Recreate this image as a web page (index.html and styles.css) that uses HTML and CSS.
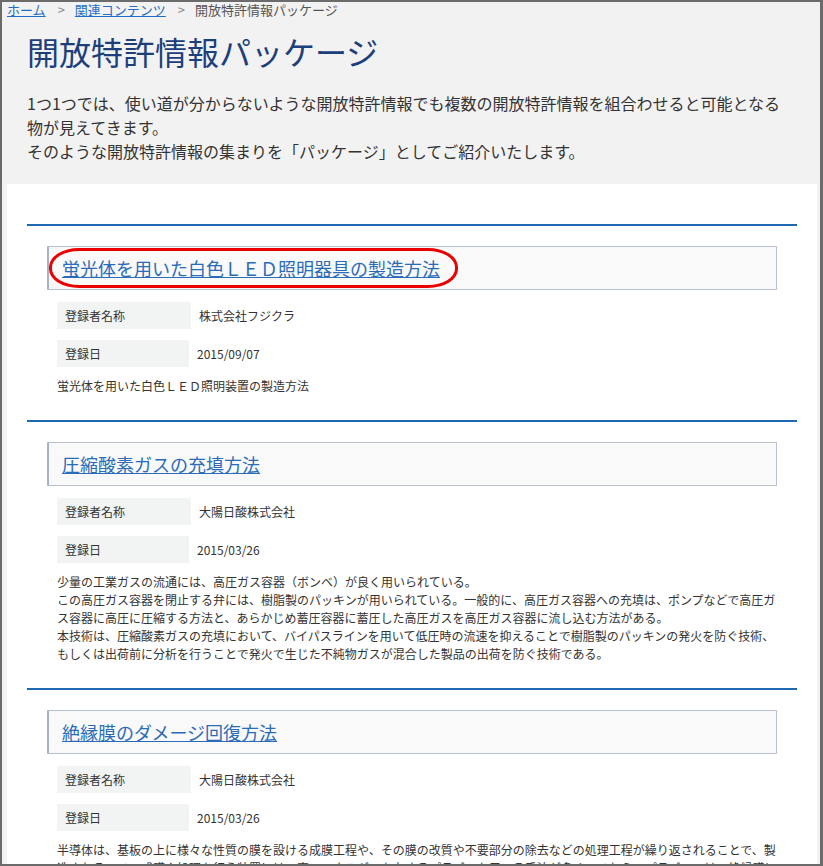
FILE: index.html
```html
<!DOCTYPE html>
<html lang="ja">
<head>
<meta charset="utf-8">
<title>開放特許情報パッケージ</title>
<link rel="stylesheet" href="styles.css">
</head>
<body>
<div class="frame">
  <nav class="breadcrumb">
    <a href="#">ホーム</a><span class="sep">&gt;</span><a href="#">関連コンテンツ</a><span class="sep">&gt;</span><span class="current">開放特許情報パッケージ</span>
  </nav>
  <header class="page-head">
    <h1 class="page-title">開放特許情報パッケージ</h1>
    <p class="lead">1つ1つでは、使い道が分からないような開放特許情報でも複数の開放特許情報を組合わせると可能となる物が見えてきます。<br>そのような開放特許情報の集まりを「パッケージ」としてご紹介いたします。</p>
  </header>
  <main class="panel">
    <section class="item">
      <h2 class="item-title"><a href="#">蛍光体を用いた白色ＬＥＤ照明器具の製造方法</a><span class="mark"></span></h2>
      <div class="meta-row"><div class="label">登録者名称</div><div class="value">株式会社フジクラ</div></div>
      <div class="meta-row meta-date"><div class="label">登録日</div><div class="value">2015/09/07</div></div>
      <p class="desc">蛍光体を用いた白色ＬＥＤ照明装置の製造方法</p>
    </section>
    <section class="item">
      <h2 class="item-title"><a href="#">圧縮酸素ガスの充填方法</a></h2>
      <div class="meta-row"><div class="label">登録者名称</div><div class="value">大陽日酸株式会社</div></div>
      <div class="meta-row meta-date"><div class="label">登録日</div><div class="value">2015/03/26</div></div>
      <p class="desc">少量の工業ガスの流通には、高圧ガス容器（ボンベ）が良く用いられている。<br>この高圧ガス容器を閉止する弁には、樹脂製のパッキンが用いられている。一般的に、高圧ガス容器への充填は、ポンプなどで高圧ガス容器に高圧に圧縮する方法と、あらかじめ蓄圧容器に蓄圧した高圧ガスを高圧ガス容器に流し込む方法がある。<br>本技術は、圧縮酸素ガスの充填において、バイパスラインを用いて低圧時の流速を抑えることで樹脂製のパッキンの発火を防ぐ技術、<br>もしくは出荷前に分析を行うことで発火で生じた不純物ガスが混合した製品の出荷を防ぐ技術である。</p>
    </section>
    <section class="item">
      <h2 class="item-title"><a href="#">絶縁膜のダメージ回復方法</a></h2>
      <div class="meta-row"><div class="label">登録者名称</div><div class="value">大陽日酸株式会社</div></div>
      <div class="meta-row meta-date"><div class="label">登録日</div><div class="value">2015/03/26</div></div>
      <p class="desc">半導体は、基板の上に様々な性質の膜を設ける成膜工程や、その膜の改質や不要部分の除去などの処理工程が繰り返されることで、製造される。この成膜や処理を行う装置には、高いエネルギーを有するプラズマを用いる手法が多く、これらのプラズマでは、絶縁膜にダメージが生じることがある。</p>
    </section>
  </main>
</div>
</body>
</html>
```
FILE: styles.css
```css
html, body {
  margin: 0;
  padding: 0;
}
body {
  font-family: "Noto Sans CJK JP", "Noto Sans", sans-serif;
  color: #333;
  background: #f2f2f2;
}
.frame {
  box-sizing: border-box;
  width: 823px;
  height: 866px;
  overflow: hidden;
  border-style: solid;
  border-color: #6b6b6b;
  border-width: 2px 3px 2px 2px;
  background: #f2f2f2;
}
.breadcrumb {
  padding: 0 5px;
  font-size: 13px;
  line-height: 16px;
  color: #555;
  white-space: nowrap;
}
.breadcrumb a {
  color: #1f6dc4;
  text-decoration: underline;
}
.breadcrumb .sep {
  color: #888;
  margin: 0 10px 0 12px;
}
.page-head {
  padding: 0 25px;
}
.page-title {
  margin: 12px 0 0;
  font-size: 32px;
  line-height: 42px;
  font-weight: normal;
  color: #1c3f7b;
}
.lead {
  margin: 19px 0 0;
  font-size: 16px;
  line-height: 24px;
  color: #333;
}
.panel {
  margin: 21px 3px 0 5px;
  padding: 40px 20px 0;
  background: #fff;
}
.item {
  border-top: 2px solid #1f69b3;
  padding: 20px 20px 25px;
}
.item-title {
  position: relative;
  box-sizing: border-box;
  height: 44px;
  margin: 0 0 12px;
  padding: 0 13px;
  display: flex;
  align-items: center;
  background: #f9f9f9;
  border: 1px solid #b9c0d0;
  border-left: 2px solid #a9b1c4;
  border-radius: 1px;
  font-size: 18px;
  line-height: 24px;
  font-weight: normal;
}
.item-title a {
  color: #2a6cb8;
  text-decoration: underline;
}
.mark {
  position: absolute;
  left: 0;
  top: 1px;
  box-sizing: border-box;
  width: 409px;
  height: 40px;
  border: 3.5px solid #ea0000;
  border-radius: 30px / 19px;
}
.meta-row {
  display: flex;
  height: 27px;
  margin: 0 0 11px 10px;
  font-size: 12px;
  line-height: 16px;
}
.meta-row .label {
  box-sizing: border-box;
  width: 134px;
  padding: 0 8px;
  background: #f2f3f3;
  display: flex;
  align-items: center;
  color: #333;
}
.meta-date .label {
  width: 132px;
}
.meta-row .value {
  display: flex;
  align-items: center;
  padding-left: 8px;
  color: #333;
}
.desc {
  margin: -1px 0 0 10px;
  width: 720px;
  font-size: 12px;
  line-height: 18px;
  color: #333;
}
```
